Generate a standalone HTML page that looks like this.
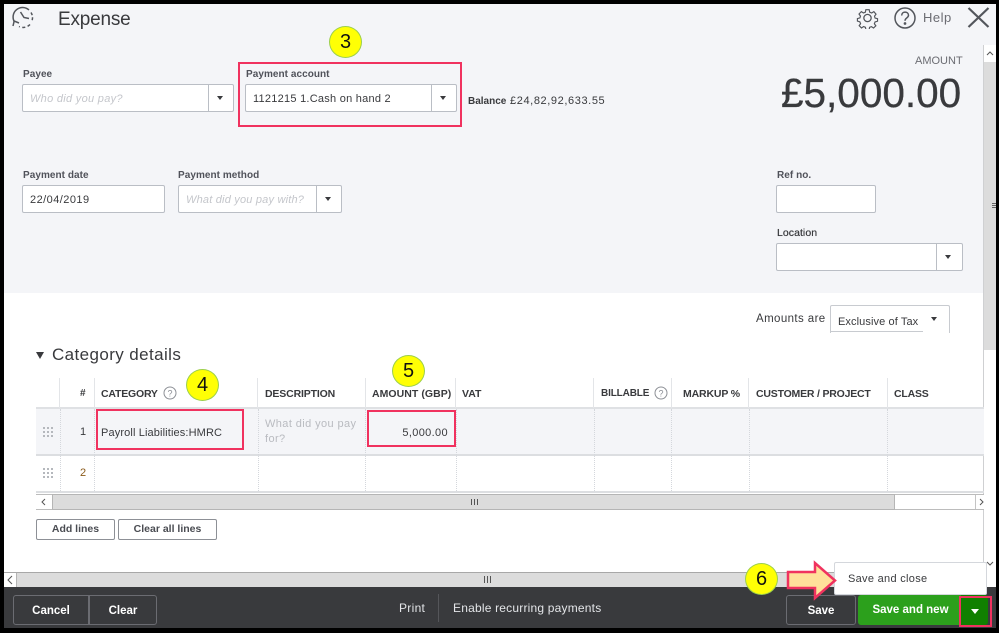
<!DOCTYPE html>
<html>
<head>
<meta charset="utf-8">
<style>
html,body{margin:0;padding:0;background:#000;}
#p{position:relative;width:999px;height:633px;overflow:hidden;background:#000;font-family:"Liberation Sans",sans-serif;color:#393a3d;filter:blur(.35px);}
#p div,#p span.a{position:absolute;box-sizing:border-box;white-space:nowrap;}
.l{font-size:10px;font-weight:bold;color:#50525a;line-height:12px;letter-spacing:.05px;}
.i{background:#fff;border:1px solid #babec5;border-radius:2px;height:28px;}
.t{font-size:11px;line-height:14px;color:#393a3d;letter-spacing:.35px;}
.ph{font-size:11px;line-height:14px;color:#c4c6cb;font-style:italic;letter-spacing:.2px;}
.d{width:0;height:0;border-left:3.5px solid transparent;border-right:3.5px solid transparent;border-top:4px solid #393a3d;}
.v{width:1px;background:#babec5;top:0;bottom:0;}
.h{font-size:10px;font-weight:bold;line-height:12px;color:#393a3d;top:388px;}
.c{width:1px;background:#e3e5e8;}
.cd{width:0;border-left:1px dotted #d4d7dc;}
.rb{border:2.5px solid #f0325f;}
.y{width:33px;height:32px;border-radius:50%;background:#ffff05;border:1px solid #9ccf4a;font-size:20px;line-height:30px;text-align:center;color:#111;}
.b{border:1px solid #8d9096;border-radius:2px;background:#fff;font-size:10.5px;font-weight:bold;color:#4a4c52;text-align:center;line-height:19px;height:21px;}
.fb{border:1px solid #6b6c72;border-radius:3px;background:#393a3d;font-size:11.5px;font-weight:bold;color:#fff;text-align:center;height:30px;line-height:30px;top:595px;}
</style>
</head>
<body>
<div id="p">
<div style="left:4px;top:4px;width:992px;height:624px;background:#fff"></div>
<div style="left:4px;top:4px;width:992px;height:289px;background:#f4f5f8"></div>

<svg style="position:absolute;left:10px;top:6px" width="26" height="24" viewBox="0 0 26 24" fill="none" stroke="#53565c" stroke-width="1.5">
<path d="M4.500 16 A9.500 9.500 0 0 1 19 4"/><path d="M21 6.500 A9.500 9.500 0 0 1 22.500 12 A9.500 9.500 0 0 1 21.500 16" stroke-dasharray="3 2"/><path d="M20 18.500 A9.500 9.500 0 0 1 9 20.500" stroke-dasharray="3 2.500"/>
<path d="M3 20 L4.200 15 L9 17"/><path d="M10.500 6 L14 11.500 L19 12.500"/></svg>
<div style="left:58px;top:8px;font-size:19px;line-height:24px;color:#393a3d;letter-spacing:-.2px">Expense</div>

<svg style="position:absolute;left:856px;top:7px" width="23" height="22" viewBox="0 0 24 24" fill="none" stroke="#53565c" stroke-width="1.400"><circle cx="12" cy="12" r="4"/><path d="M10 2h4l.6 3 2.400 1 2.600-1.600 2.600 3-1.800 2.400.6 2.200 3 .8v3l-3 .9-.8 2.200 1.800 2.500-2.800 2.600-2.500-1.700-2.200.9-.6 2.800h-3.800l-.6-2.900-2.200-.9-2.500 1.700-2.800-2.700 1.700-2.400-.9-2.200-2.900-.9v-3l3-.8.7-2.200-1.800-2.500 2.800-2.900 2.500 1.700 2.300-1z" transform="translate(1.100 1.100) scale(.91)"/></svg>
<svg style="position:absolute;left:893px;top:7px" width="24" height="22" viewBox="0 0 24 22" fill="none" stroke="#53565c" stroke-width="1.500"><circle cx="12" cy="11" r="10"/><path d="M8.700 8.500c0-4.500 6.800-4.300 6.800-.2 0 2.700-3.500 2.600-3.500 5.400"/><circle cx="12" cy="16.500" r=".6" fill="#53565c"/></svg>
<div style="left:923px;top:10px;font-size:13px;line-height:16px;color:#6b6c72;letter-spacing:.5px">Help</div>
<svg style="position:absolute;left:967px;top:7px" width="23" height="21" viewBox="0 0 23 21" fill="none" stroke="#53565c" stroke-width="2.200"><path d="M1.500 1 L21.500 20 M21.500 1 L1.500 20"/></svg>

<div class="l" style="left:23px;top:69px">Payee</div>
<div class="i" style="left:22px;top:84px;width:212px"></div>
<div class="v" style="left:208px;top:84px;height:28px;bottom:auto"></div>
<div class="d" style="left:217px;top:96px"></div>
<div class="ph" style="left:30px;top:92px;letter-spacing:.3px">Who did you pay?</div>

<div class="l" style="left:246px;top:69px">Payment account</div>
<div class="i" style="left:245px;top:84px;width:212px"></div>
<div class="v" style="left:431px;top:84px;height:28px;bottom:auto"></div>
<div class="d" style="left:440px;top:96px"></div>
<div class="t" style="left:253px;top:92px;letter-spacing:.25px">1121215 1.Cash on hand 2</div>
<div class="rb" style="left:238px;top:62px;width:224px;height:65px"></div>
<div class="t" style="left:468px;top:94px;letter-spacing:.6px;white-space:nowrap"><b style="font-size:10px;letter-spacing:0">Balance</b> £24,82,92,633.55</div>

<div class="l" style="left:23px;top:170px">Payment date</div>
<div class="i" style="left:22px;top:185px;width:143px"></div>
<div class="t" style="left:30px;top:193px;letter-spacing:.45px">22/04/2019</div>
<div class="l" style="left:178px;top:170px">Payment method</div>
<div class="i" style="left:178px;top:185px;width:164px"></div>
<div class="v" style="left:316px;top:185px;height:28px;bottom:auto"></div>
<div class="d" style="left:325px;top:197px"></div>
<div class="ph" style="left:186px;top:193px">What did you pay with?</div>

<div style="left:915px;top:55px;font-size:11px;line-height:13px;color:#6b6c72">AMOUNT</div>
<div style="left:781px;top:68px;font-size:40.500px;line-height:50px;color:#393a3d;-webkit-text-stroke:.3px #393a3d">£5,000.00</div>
<div class="l" style="left:777px;top:170px">Ref no.</div>
<div class="i" style="left:776px;top:185px;width:100px"></div>
<div class="l" style="left:777px;top:227px;font-weight:normal;font-size:10.500px;color:#393a3d;text-shadow:0 0 .4px #393a3d">Location</div>
<div class="i" style="left:776px;top:243px;width:187px"></div>
<div class="v" style="left:936px;top:243px;height:28px;bottom:auto"></div>
<div class="d" style="left:945px;top:255px"></div>

<!-- right scrollbar -->
<div style="left:983px;top:45px;width:13px;height:527px;background:#fff;border-left:1px solid #cfd0d2"></div>
<div style="left:984px;top:62px;width:12px;height:288px;background:#dcdcdc"></div>
<svg style="position:absolute;left:985px;top:50px" width="10" height="7" fill="none" stroke="#555" stroke-width="1"><path d="M2 5 L5 2 L8 5"/></svg>
<div style="left:992px;top:203px;width:4px;height:5px;border-top:1px solid #666;border-bottom:1px solid #666"></div>
<div style="left:992px;top:205px;width:4px;height:1px;background:#666"></div>
<svg style="position:absolute;left:985px;top:560px" width="10" height="7" fill="none" stroke="#555" stroke-width="1"><path d="M2 2 L5 5 L8 2"/></svg>

<!-- amounts are -->
<div style="left:756px;top:312px;font-size:11.500px;line-height:14px;color:#393a3d;letter-spacing:.4px">Amounts are</div>
<div style="left:830px;top:305px;width:120px;height:28px;background:#fff;border:1px solid #c8cbd0;border-bottom:none;border-radius:2px 2px 0 0"></div>
<div style="left:831px;top:331px;width:92px;height:1px;background:#c8cbd0"></div>
<div style="left:838px;top:315px;font-size:11px;line-height:14px;color:#393a3d;letter-spacing:.1px">Exclusive of Tax</div>
<div class="d" style="left:931px;top:317px"></div>

<div class="d" style="left:36px;top:352px;border-left-width:4px;border-right-width:4px;border-top-width:7px"></div>
<div style="left:52px;top:345px;font-size:17px;line-height:20px;color:#393a3d;letter-spacing:.4px">Category details</div>

<!-- table -->
<div style="left:36px;top:408px;width:948px;height:47px;background:#f4f5f8"></div>
<div style="left:36px;top:407px;width:948px;height:2px;background:#dfe1e4"></div>
<div style="left:36px;top:454px;width:948px;height:2px;background:#dcdee1"></div>
<div style="left:36px;top:491px;width:948px;height:2px;background:#dcdee1"></div>

<div class="c" style="left:59px;top:378px;height:30px"></div>
<div class="c" style="left:94px;top:378px;height:30px"></div>
<div class="c" style="left:257px;top:378px;height:30px"></div>
<div class="c" style="left:365px;top:378px;height:30px"></div>
<div class="c" style="left:455px;top:378px;height:30px"></div>
<div class="c" style="left:593px;top:378px;height:30px"></div>
<div class="c" style="left:671px;top:378px;height:30px"></div>
<div class="c" style="left:748px;top:378px;height:30px"></div>
<div class="c" style="left:887px;top:378px;height:30px"></div>

<div class="cd" style="left:60px;top:409px;height:82px"></div>
<div class="cd" style="left:94px;top:409px;height:82px"></div>
<div class="cd" style="left:258px;top:409px;height:82px"></div>
<div class="cd" style="left:365px;top:409px;height:82px"></div>
<div class="cd" style="left:456px;top:409px;height:82px"></div>
<div class="cd" style="left:594px;top:409px;height:82px"></div>
<div class="cd" style="left:671px;top:409px;height:82px"></div>
<div class="cd" style="left:749px;top:409px;height:82px"></div>
<div class="cd" style="left:887px;top:409px;height:82px"></div>

<div class="h" style="left:80px">#</div>
<div class="h" style="left:101px;font-size:10.500px;letter-spacing:-.2px">CATEGORY</div>
<svg style="position:absolute;left:163px;top:386px" width="14" height="14" fill="none" stroke="#8d9096"><circle cx="7" cy="7" r="6"/><text x="7" y="10.500" font-size="9" text-anchor="middle" fill="#8d9096" stroke="none" font-family="Liberation Sans">?</text></svg>
<div class="h" style="left:265px;font-size:10.500px;letter-spacing:-.15px">DESCRIPTION</div>
<div class="h" style="left:372px;font-size:10.500px;letter-spacing:.05px">AMOUNT (GBP)</div>
<div class="h" style="left:462px;font-size:10.500px">VAT</div>
<div class="h" style="left:601px;letter-spacing:-.15px">BILLABLE</div>
<svg style="position:absolute;left:654px;top:386px" width="14" height="14" fill="none" stroke="#8d9096"><circle cx="7" cy="7" r="6"/><text x="7" y="10.500" font-size="9" text-anchor="middle" fill="#8d9096" stroke="none" font-family="Liberation Sans">?</text></svg>
<div class="h" style="left:683px;font-size:10.500px;letter-spacing:-.15px">MARKUP %</div>
<div class="h" style="left:756px;font-size:10.500px;letter-spacing:-.2px">CUSTOMER / PROJECT</div>
<div class="h" style="left:894px;font-size:10.500px;letter-spacing:-.2px">CLASS</div>

<svg style="position:absolute;left:43px;top:427px" width="10" height="10" fill="#b5b8bd"><rect x="0" y="0" width="2" height="2"/><rect x="4" y="0" width="2" height="2"/><rect x="8" y="0" width="2" height="2"/><rect x="0" y="4" width="2" height="2"/><rect x="4" y="4" width="2" height="2"/><rect x="8" y="4" width="2" height="2"/><rect x="0" y="8" width="2" height="2"/><rect x="4" y="8" width="2" height="2"/><rect x="8" y="8" width="2" height="2"/></svg>
<svg style="position:absolute;left:43px;top:468px" width="10" height="10" fill="#b5b8bd"><rect x="0" y="0" width="2" height="2"/><rect x="4" y="0" width="2" height="2"/><rect x="8" y="0" width="2" height="2"/><rect x="0" y="4" width="2" height="2"/><rect x="4" y="4" width="2" height="2"/><rect x="8" y="4" width="2" height="2"/><rect x="0" y="8" width="2" height="2"/><rect x="4" y="8" width="2" height="2"/><rect x="8" y="8" width="2" height="2"/></svg>

<div class="t" style="left:80px;top:425px">1</div>
<div class="t" style="left:80px;top:466px;color:#8a5a1a">2</div>
<div class="t" style="left:101px;top:426px;letter-spacing:.13px">Payroll Liabilities:HMRC</div>
<div class="rb" style="left:96px;top:409px;width:148px;height:41px"></div>
<div style="left:265px;top:417px;font-size:11px;line-height:15px;color:#b9bbc0;letter-spacing:.4px">What did you pay<br>for?</div>
<div class="t" style="left:380px;top:426px;width:68px;text-align:right">5,000.00</div>
<div class="rb" style="left:367px;top:410px;width:89px;height:37px"></div>

<!-- table scrollbar -->
<div style="left:36px;top:494px;width:948px;height:16px;background:#fff;border-top:1px solid #bcbcbc;border-bottom:1px solid #bcbcbc"></div>
<div style="left:52px;top:494px;width:843px;height:16px;background:#dcdcdc;border:1px solid #b5b5b5"></div>
<svg style="position:absolute;left:39px;top:497px" width="10" height="10" fill="none" stroke="#555"><path d="M6 2 L3 5 L6 8"/></svg>
<svg style="position:absolute;left:977px;top:497px" width="8" height="10" fill="none" stroke="#555"><path d="M3 2 L6 5 L3 8"/></svg>
<div style="left:975px;top:495px;width:1px;height:14px;background:#c4c4c4"></div>
<div style="left:471px;top:499px;width:7px;height:6px;border-left:1px solid #555;border-right:1px solid #555"></div>
<div style="left:474px;top:499px;width:1px;height:6px;background:#555"></div>

<div class="b" style="left:36px;top:519px;width:79px">Add lines</div>
<div class="b" style="left:118px;top:519px;width:99px">Clear all lines</div>

<!-- bottom scrollbar -->
<div style="left:4px;top:572px;width:980px;height:15px;background:#dcdcdc;border-top:1px solid #a8a8a8"></div>
<div style="left:4px;top:573px;width:13px;height:14px;background:#fff;border-right:1px solid #b5b5b5"></div>
<svg style="position:absolute;left:5px;top:575px" width="10" height="10" fill="none" stroke="#555"><path d="M7 1 L3 5 L7 9"/></svg>
<div style="left:484px;top:576px;width:7px;height:7px;border-left:1px solid #555;border-right:1px solid #555"></div>
<div style="left:487px;top:576px;width:1px;height:7px;background:#555"></div>

<!-- footer -->
<div style="left:4px;top:587px;width:992px;height:41px;background:#393a3d"></div>
<div class="fb" style="left:13px;width:76px;border-radius:3px 0 0 3px">Cancel</div>
<div class="fb" style="left:89px;width:68px;border-radius:0 3px 3px 0">Clear</div>
<div style="left:399px;top:601px;font-size:12px;line-height:15px;color:#e3e5e8;letter-spacing:.3px">Print</div>
<div style="left:438px;top:594px;width:1px;height:28px;background:#55565a"></div>
<div style="left:453px;top:601px;font-size:12px;line-height:15px;color:#e3e5e8;letter-spacing:.2px">Enable recurring payments</div>
<div class="fb" style="left:786px;width:70px">Save</div>
<div style="left:858px;top:595px;width:105px;height:30px;background:#2ca01c;border-radius:3px 0 0 3px;color:#fff;font-size:11.500px;font-weight:bold;text-align:center;line-height:30px;">Save and new</div>
<div style="left:961px;top:595px;width:27px;height:30px;background:#108000;border-radius:0 3px 3px 0"></div>
<div class="rb" style="left:959px;top:596px;width:33px;height:31px"></div>
<div class="d" style="left:971px;top:609px;border-top-color:#fff;border-left-width:4px;border-right-width:4px;border-top-width:5px"></div>

<!-- dropdown -->
<div style="left:834px;top:562px;width:153px;height:33px;background:#fff;border:1px solid #d4d7dc;border-radius:2px"></div>
<div style="left:848px;top:572px;font-size:11px;line-height:14px;color:#393a3d;letter-spacing:.3px">Save and close</div>

<!-- arrow -->
<svg style="position:absolute;left:786px;top:560px" width="52" height="42"><path d="M2 12 H29 V3 L49 20.500 L29 38 V28 H2 Z" fill="#ffe09a" stroke="#f0325f" stroke-width="2.500"/></svg>

<!-- badges -->
<div class="y" style="left:329px;top:26px">3</div>
<div class="y" style="left:186px;top:369px;">4</div>
<div class="y" style="left:392px;top:355px">5</div>
<div class="y" style="left:745px;top:563px">6</div>
</div>
</body>
</html>
